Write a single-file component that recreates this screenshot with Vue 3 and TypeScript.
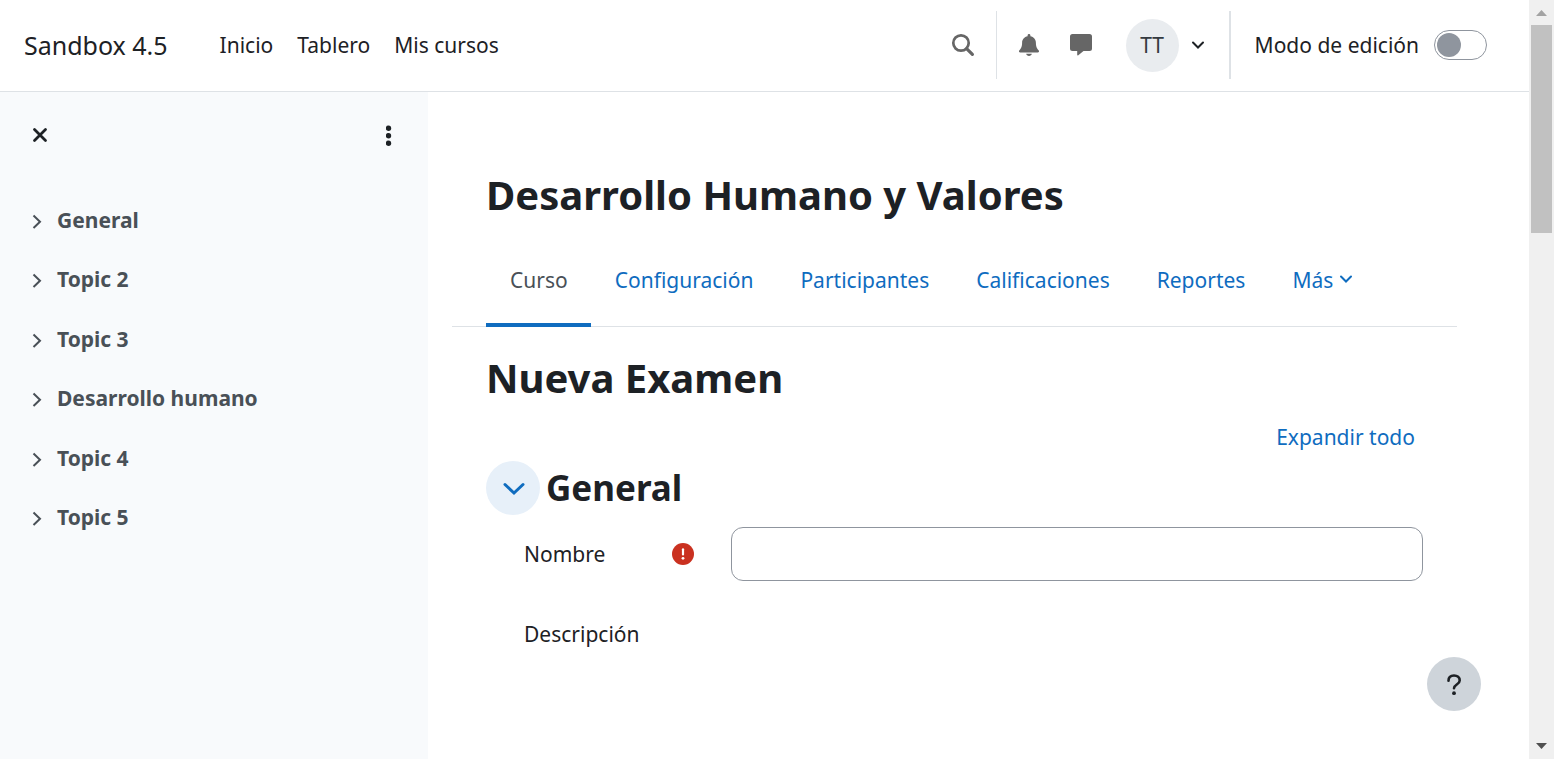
<script setup lang="ts">
import { ref } from 'vue'

interface Tab {
  label: string
  active?: boolean
  more?: boolean
}

const navLinks: string[] = ['Inicio', 'Tablero', 'Mis cursos']

const sections: string[] = ['General', 'Topic 2', 'Topic 3', 'Desarrollo humano', 'Topic 4', 'Topic 5']

const tabs: Tab[] = [
  { label: 'Curso', active: true },
  { label: 'Configuración' },
  { label: 'Participantes' },
  { label: 'Calificaciones' },
  { label: 'Reportes' },
  { label: 'Más', more: true },
]

const editMode = ref(false)
const quizName = ref('')
</script>

<template>
  <div class="window">
    <div class="page">
      <header class="topbar">
        <a class="brand" href="#">Sandbox 4.5</a>
        <nav class="primary">
          <a v-for="link in navLinks" :key="link" href="#">{{ link }}</a>
        </nav>
        <div class="tools">
          <button class="search" type="button" aria-label="Buscar">
            <svg width="24" height="24" viewBox="0 0 24 24">
              <circle cx="10" cy="10" r="7.7" fill="none" stroke="#666" stroke-width="2.7" />
              <path d="M15.6 15.6 21.4 21.4" stroke="#666" stroke-width="3.2" stroke-linecap="round" />
            </svg>
          </button>
          <button class="bell" type="button" aria-label="Notificaciones">
            <svg width="22" height="24" viewBox="0 0 22 24">
              <path
                d="M11 1c-.8 0-1.4.6-1.4 1.400v.8C6.300 3.900 4.100 6.400 4.100 9.700c0 4.300-1.200 6-2.700 7.500-.9.9-.4 2.200.9 2.200h17.400c1.300 0 1.800-1.300.9-2.200-1.500-1.500-2.700-3.200-2.700-7.500 0-3.300-2.200-5.800-5.500-6.500v-.8C12.400 1.600 11.800 1 11 1ZM8.200 20.800c.2 1.300 1.300 2.200 2.800 2.200s2.600-.9 2.800-2.200Z"
                fill="#666"
              />
            </svg>
          </button>
          <button class="chat" type="button" aria-label="Mensajes">
            <svg width="24" height="24" viewBox="0 0 24 24">
              <path
                d="M3.500 1h17A2.500 2.500 0 0 1 23 3.500v12a2.500 2.500 0 0 1-2.500 2.500h-6l-5.200 4.300c-.5.4-1.100.1-1.100-.5V18H3.500A2.500 2.500 0 0 1 1 15.500v-12A2.500 2.500 0 0 1 3.500 1Z"
                fill="#666"
              />
            </svg>
          </button>
          <button class="user" type="button" aria-label="Menú de usuario">
            <span class="avatar">TT</span>
            <svg width="14" height="10" viewBox="0 0 14 10">
              <path d="M2 2.500 7 7.500 12 2.500" fill="none" stroke="#1d2125" stroke-width="2" stroke-linecap="round" />
            </svg>
          </button>
          <div class="edit">
            <label for="edit-mode">Modo de edición</label>
            <input id="edit-mode" v-model="editMode" type="checkbox" role="switch" />
          </div>
        </div>
      </header>

      <div class="body">
        <aside class="drawer">
          <div class="drawer-head">
            <button type="button" aria-label="Cerrar índice">
              <svg width="16" height="16" viewBox="0 0 16 16">
                <path d="M2.500 2.500 13.500 13.500M13.500 2.500 2.500 13.500" stroke="#1d2125" stroke-width="2.800" stroke-linecap="round" />
              </svg>
            </button>
            <button type="button" aria-label="Opciones">
              <svg width="6" height="22" viewBox="0 0 6 22">
                <circle cx="2.500" cy="4.200" r="2.700" fill="#1d2125" />
                <circle cx="2.500" cy="11.700" r="2.700" fill="#1d2125" />
                <circle cx="2.500" cy="19.200" r="2.700" fill="#1d2125" />
              </svg>
            </button>
          </div>
          <ul class="index">
            <li v-for="section in sections" :key="section">
              <a href="#">
                <svg width="10" height="18" viewBox="0 0 10 18">
                  <path d="M1.500 4.500 8 10.700 1.500 17" fill="none" stroke="#495057" stroke-width="2" />
                </svg>
                <span>{{ section }}</span>
              </a>
            </li>
          </ul>
        </aside>

        <main class="content">
          <h1>Desarrollo Humano y Valores</h1>
          <nav class="tabs">
            <a v-for="tab in tabs" :key="tab.label" href="#" :class="{ active: tab.active }">
              {{ tab.label }}
              <svg v-if="tab.more" width="14" height="10" viewBox="0 0 14 10">
                <path d="M2 1.500 7 6.500 12 1.500" fill="none" stroke="#0f6cbf" stroke-width="2" stroke-linecap="round" />
              </svg>
            </a>
          </nav>
          <form class="form" @submit.prevent>
            <h2>Nueva Examen</h2>
            <a class="expand" href="#">Expandir todo</a>
            <div class="group">
              <button type="button" aria-label="Contraer General">
                <svg width="24" height="16" viewBox="0 0 24 16">
                  <path d="M4 4.500 13 13 22 4.500" fill="none" stroke="#0f6cbf" stroke-width="3" stroke-linecap="round" />
                </svg>
              </button>
              <h3>General</h3>
            </div>
            <div class="row">
              <div class="name">
                <label for="quiz-name">Nombre</label>
                <svg width="22" height="22" viewBox="0 0 22 22" role="img" aria-label="Requerido">
                  <circle cx="11" cy="11" r="11" fill="#ca3120" />
                  <path d="M11 6.300V11.500" stroke="#fff" stroke-width="2.200" stroke-linecap="round" />
                  <circle cx="11" cy="15.300" r="1.400" fill="#fff" />
                </svg>
              </div>
              <input id="quiz-name" v-model="quizName" type="text" />
            </div>
            <div class="row">
              <div class="name"><span>Descripción</span></div>
            </div>
          </form>
        </main>
      </div>

      <button class="help" type="button" aria-label="Ayuda">
        <svg width="16" height="24" viewBox="0 0 16 24">
          <path
            d="M2.500 8.800C2.500 5.200 4.600 3.500 8 3.500s5.700 1.900 5.700 4.900c0 4.100-5.700 4-5.700 7.800"
            fill="none"
            stroke="#1d2125"
            stroke-width="2.600"
            stroke-linecap="round"
          />
          <circle cx="8" cy="21.200" r="1.900" fill="#1d2125" />
        </svg>
      </button>
    </div>

    <div class="scrollbar" aria-hidden="true">
      <svg width="25" height="25" viewBox="0 0 25 25"><path d="M7 16 12.500 10 18 16Z" fill="#a3a3a3" /></svg>
      <div class="thumb"></div>
      <svg width="25" height="25" viewBox="0 0 25 25"><path d="M7 9 12.500 15 18 9Z" fill="#505050" /></svg>
    </div>
  </div>
</template>

<style>
body {
  margin: 0;
  background: #fff;
}
</style>

<style scoped>
.window {
  display: flex;
  height: 100vh;
  overflow: hidden;
  font-family: 'Segoe UI', 'Noto Sans', sans-serif;
  font-size: 21px;
  line-height: 34px;
  color: #1d2125;
}

.window * {
  box-sizing: border-box;
}

a {
  color: #0f6cbf;
  text-decoration: none;
}

button {
  display: flex;
  align-items: center;
  justify-content: center;
  padding: 0;
  border: 0;
  background: none;
  font: inherit;
  color: inherit;
  cursor: pointer;
}

.page {
  position: relative;
  display: flex;
  flex: 1;
  flex-direction: column;
  min-width: 0;
}

.topbar {
  display: flex;
  align-items: center;
  height: 92px;
  padding: 0 42px 1px 24px;
  border-bottom: 1px solid #dee2e6;
}

.topbar a {
  color: #1d2125;
}

.brand {
  margin-right: 52px;
  font-size: 25px;
}

.primary {
  display: flex;
  gap: 24px;
}

.tools {
  display: flex;
  align-items: center;
  height: 68px;
  margin-left: auto;
}

.search {
  height: 68px;
  padding: 0 21px;
  border-right: 1px solid #dee2e6;
}

.bell {
  padding: 0 21px;
}

.chat {
  padding: 0 33px 0 8px;
}

.user {
  gap: 12px;
}

.avatar {
  width: 53px;
  height: 53px;
  border-radius: 50%;
  background: #e9ecef;
  line-height: 53px;
  color: #343a40;
}

.edit {
  display: flex;
  align-items: center;
  gap: 13px;
  height: 68px;
  margin-left: 24px;
  padding-left: 24px;
  border-left: 2px solid #dee2e6;
}

.edit label {
  padding-right: 2px;
}

.edit input {
  width: 53px;
  height: 30px;
  margin: 0;
  padding: 2px;
  appearance: none;
  border: 1px solid #8f959e;
  border-radius: 15px;
  background: #fff;
}

.edit input::before {
  content: '';
  display: block;
  width: 24px;
  height: 24px;
  border-radius: 50%;
  background: #8f959e;
}

.edit input:checked::before {
  margin-left: auto;
}

.body {
  display: flex;
  flex: 1;
  min-height: 0;
}

.drawer {
  flex: none;
  width: 428px;
  background: #f8fafc;
}

.drawer-head {
  display: flex;
  align-items: center;
  justify-content: space-between;
  height: 86px;
  padding: 0 36px 0 32px;
}

.index {
  display: grid;
  grid-auto-rows: 1fr;
  min-height: 357px;
  margin: 12px 0 0;
  padding: 0 32px;
  list-style: none;
}

.index a {
  display: flex;
  align-items: center;
  gap: 15px;
  height: 100%;
  font-weight: 700;
  color: #495057;
}

.content {
  flex: 1;
  min-width: 0;
  padding: 73px 72px 0 24px;
  overflow: hidden;
}

h1,
h2,
h3 {
  margin: 0;
  font-weight: 700;
}

h1,
h2 {
  font-size: 40px;
  line-height: 60px;
}

h1 {
  padding-left: 34px;
}

h3 {
  font-size: 35px;
  line-height: 54px;
}

.tabs {
  display: flex;
  height: 92px;
  margin-top: 10px;
  padding-left: 34px;
  border-bottom: 1px solid #dee2e6;
}

.tabs a {
  display: flex;
  align-items: center;
  gap: 6px;
  height: 92px;
  padding: 2px 23px 0 24px;
  border-bottom: 4px solid transparent;
}

.tabs a.active {
  border-bottom-color: #0f6cbf;
  color: #495057;
}

.form {
  display: flex;
  flex-direction: column;
  padding: 21px 34px 0;
}

.expand {
  align-self: flex-end;
  margin-top: 12px;
  padding-right: 8px;
}

.group {
  display: flex;
  align-items: center;
  gap: 6px;
  margin: 7px 0 12px;
}

.group button {
  width: 54px;
  height: 54px;
  border-radius: 50%;
  background: #e7f0f9;
}

.row {
  display: flex;
  align-items: center;
  min-height: 54px;
  margin-bottom: 26px;
  padding-left: 38px;
}

.name {
  display: flex;
  flex: none;
  align-items: center;
  justify-content: space-between;
  width: 170px;
  margin-right: 37px;
}

.row input {
  flex: 1;
  min-width: 0;
  height: 54px;
  padding: 0 16px;
  border: 1px solid #8f959e;
  border-radius: 12px;
  font: inherit;
  color: inherit;
}

.help {
  position: absolute;
  right: 48px;
  bottom: 48px;
  width: 54px;
  height: 54px;
  border-radius: 50%;
  background: #ced4da;
}

.scrollbar {
  display: flex;
  flex: none;
  flex-direction: column;
  width: 25px;
  background: #f0f0f0;
}

.scrollbar svg:last-child {
  margin-top: auto;
}

.thumb {
  height: 28%;
  max-height: 208px;
  margin: 0 2px;
  background: #c1c1c1;
}
</style>
